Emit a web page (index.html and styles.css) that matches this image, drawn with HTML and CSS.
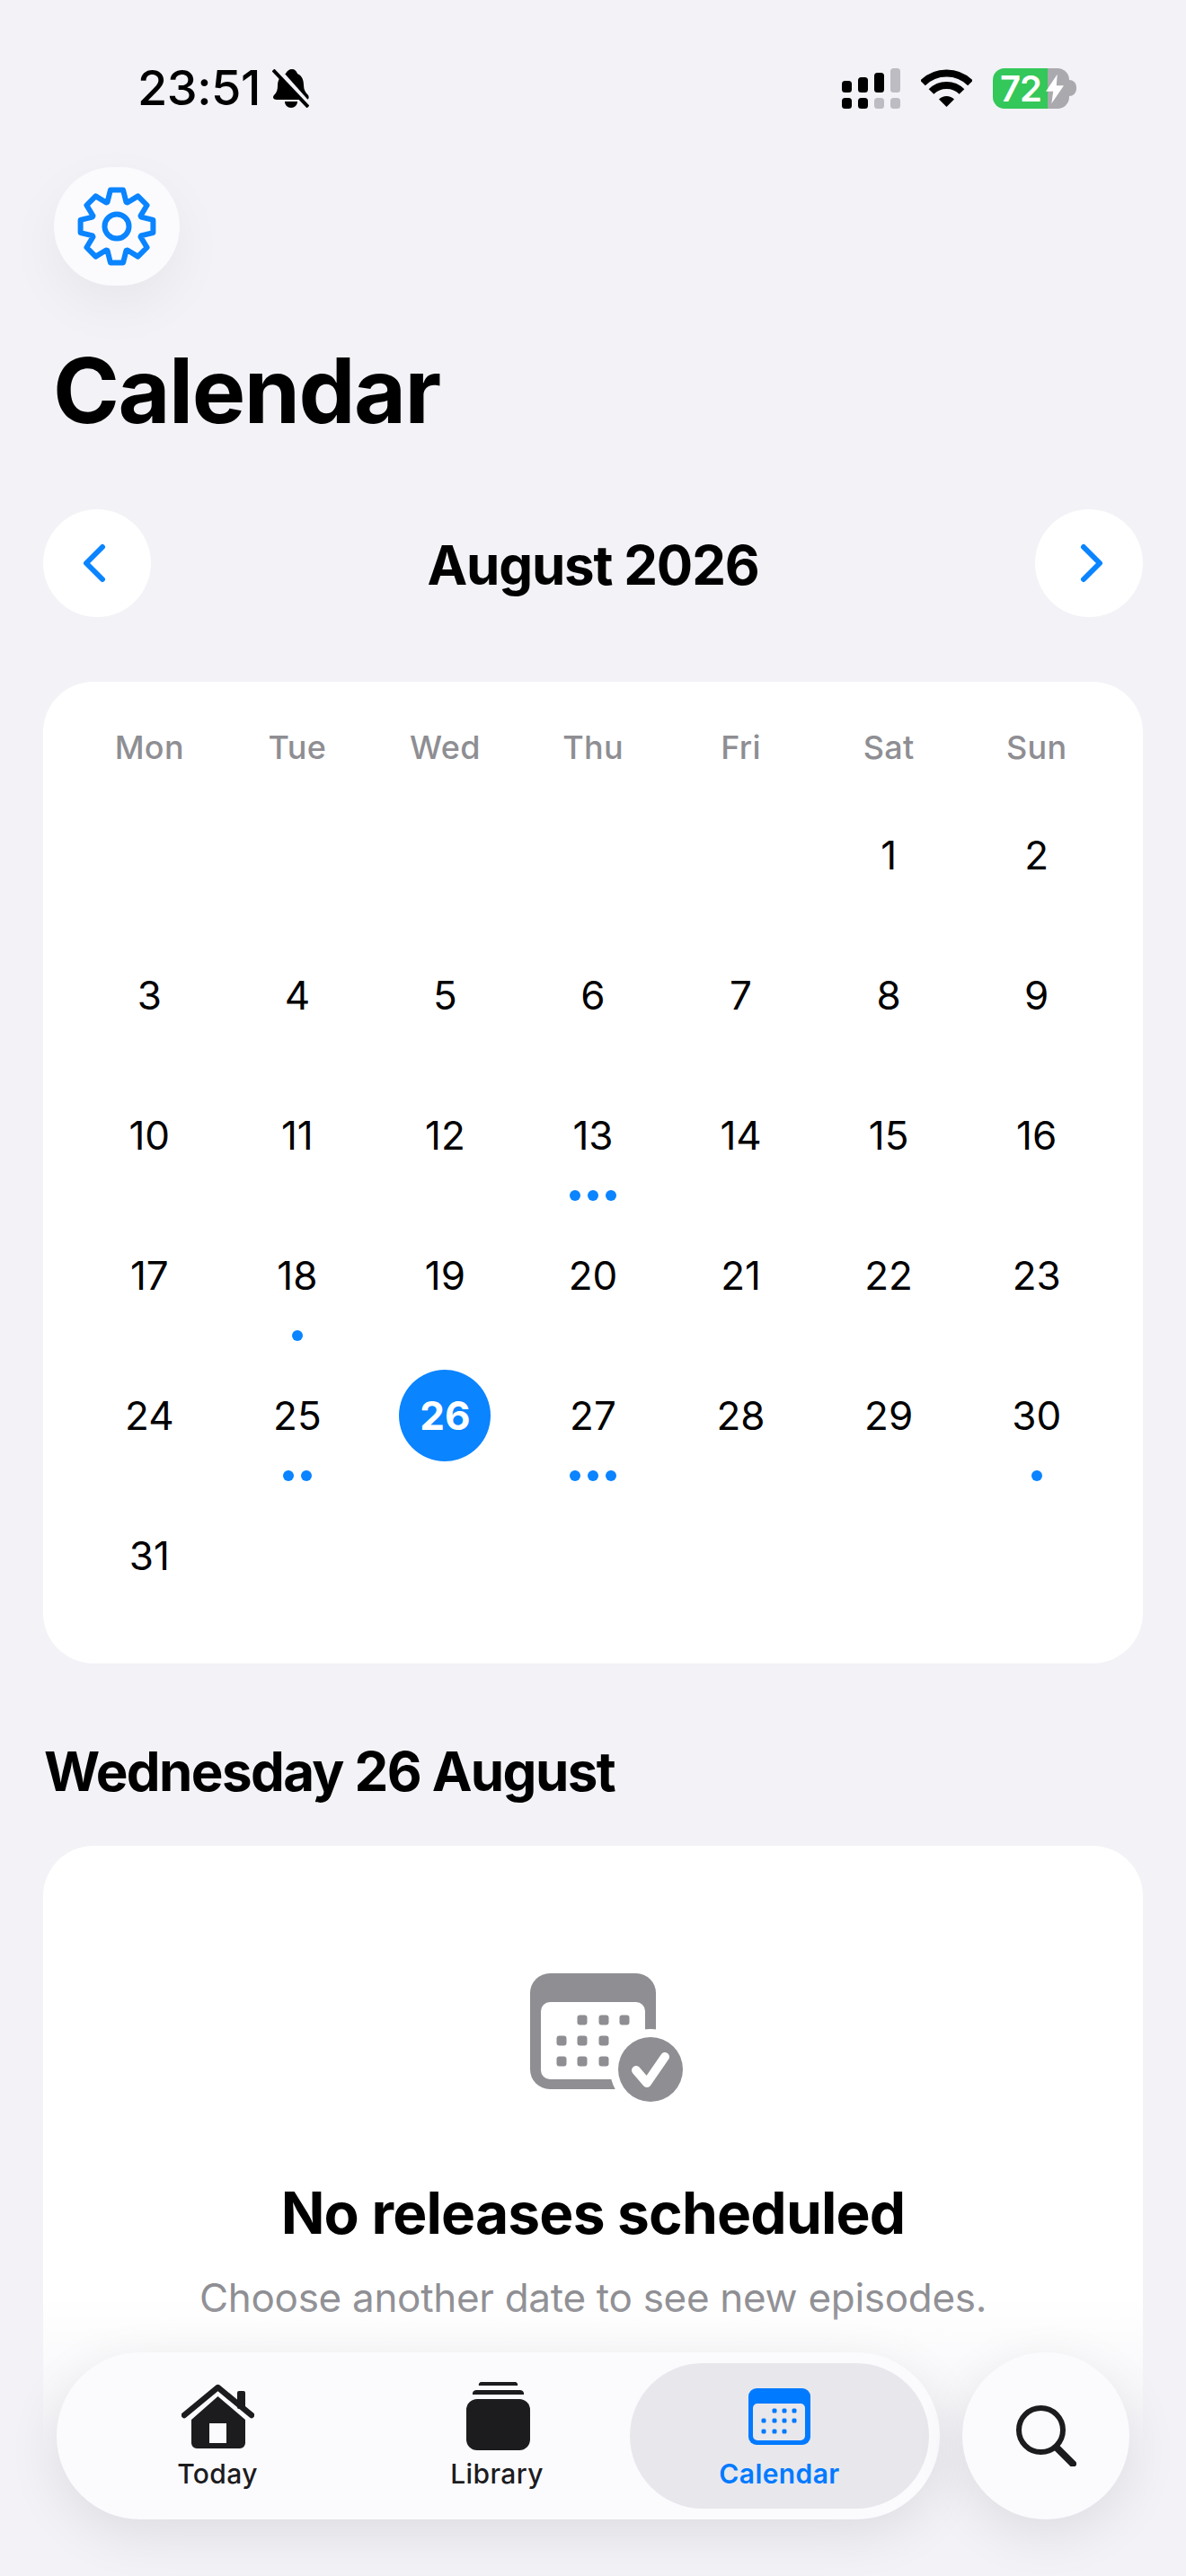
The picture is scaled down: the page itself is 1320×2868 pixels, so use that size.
FILE: index.html
```html
<html lang="en">
   <head>
      <meta charset="UTF-8">
      <meta name="viewport" content="width=device-width, initial-scale=1.0">
      <title>Calendar</title>
      <link rel="stylesheet" href="styles.css">
   </head>
   <body>
      <div class="page">
         <div class="status-bar">
            <div class="status-left">
               <span class="time">23:51</span>
               <svg class="bell" viewBox="0 0 41 43">
                  <path d="M22 0c3 0 5 2 6 5 5 2 7 7 7 13 0 5 2 8 5 11 1 2 1 4-1 5H5c-4 0-5-3-3-5 3-3 4-6 4-11C6 12 9 7 15 5c1-3 4-5 7-5zM14 36h14c0 4-3 7-7 7s-7-3-7-7z"/>
                  <path class="bell-gap" d="M3 -2L42 42"/>
                  <path class="bell-slash" d="M1 1L40 42"/>
               </svg>
            </div>
            <div class="status-right">
               <svg class="signal" viewBox="0 0 65 45">
                  <rect x="0" y="14" width="11" height="13" rx="3.5"/>
                  <rect x="18" y="10" width="11" height="17" rx="3.5"/>
                  <rect x="36" y="5" width="11" height="22" rx="3.5"/>
                  <rect class="signal-off" x="54" y="0" width="11" height="27" rx="3.5"/>
                  <rect x="0" y="33" width="11" height="12" rx="3.5"/>
                  <rect x="18" y="33" width="11" height="12" rx="3.5"/>
                  <rect class="signal-off" x="36" y="33" width="11" height="12" rx="3.5"/>
                  <rect class="signal-off" x="54" y="33" width="11" height="12" rx="3.5"/>
               </svg>
               <svg class="wifi" viewBox="0 0 57 42">
                  <path class="wifi-arc" d="M2 15.5A37.5 37.5 0 0 1 55 15.5"/>
                  <path class="wifi-arc" d="M11.5 25A24 24 0 0 1 45.5 25"/>
                  <path d="M28.5 42L20 33.5A12 12 0 0 1 37 33.5Z"/>
               </svg>
               <div class="battery">
                  <div class="battery-body">
                     <span class="battery-level">72</span>
                     <svg class="battery-bolt" viewBox="0 0 22 36">
                        <path d="M14 0L0 21h9L7 36l15-22h-9z"/>
                     </svg>
                  </div>
                  <div class="battery-nub"></div>
               </div>
            </div>
         </div>

         <button class="settings-button">
            <svg class="gear" viewBox="-44 -44 88 88">
               <polygon points="-10.4,-27.1 -7.1,-40.4 7.1,-40.4 10.4,-27.1 11.8,-26.5 23.5,-33.6 33.6,-23.5 26.5,-11.8 27.1,-10.4 40.4,-7.1 40.4,7.1 27.1,10.4 26.5,11.8 33.6,23.5 23.5,33.6 11.8,26.5 10.4,27.1 7.1,40.4 -7.1,40.4 -10.4,27.1 -11.8,26.5 -23.5,33.6 -33.6,23.5 -26.5,11.8 -27.1,10.4 -40.4,7.1 -40.4,-7.1 -27.1,-10.4 -26.5,-11.8 -33.6,-23.5 -23.5,-33.6 -11.8,-26.5"/>
               <circle cx="0" cy="0" r="13.5"/>
            </svg>
         </button>

         <h1 class="page-title">Calendar</h1>

         <div class="month-nav">
            <button class="nav-button nav-prev">
               <svg class="chevron" viewBox="0 0 28 44"><path d="M23 4L5 22l18 18"/></svg>
            </button>
            <h2 class="month-title">August 2026</h2>
            <button class="nav-button nav-next">
               <svg class="chevron" viewBox="0 0 28 44"><path d="M5 4l18 18L5 40"/></svg>
            </button>
         </div>

         <div class="card calendar-card">
            <div class="weekdays">
               <span>Mon</span><span>Tue</span><span>Wed</span><span>Thu</span><span>Fri</span><span>Sat</span><span>Sun</span>
            </div>
            <div class="days">
               <div class="day"></div>
               <div class="day"></div>
               <div class="day"></div>
               <div class="day"></div>
               <div class="day"></div>
               <div class="day"><span class="num">1</span></div>
               <div class="day"><span class="num">2</span></div>

               <div class="day"><span class="num">3</span></div>
               <div class="day"><span class="num">4</span></div>
               <div class="day"><span class="num">5</span></div>
               <div class="day"><span class="num">6</span></div>
               <div class="day"><span class="num">7</span></div>
               <div class="day"><span class="num">8</span></div>
               <div class="day"><span class="num">9</span></div>

               <div class="day"><span class="num">10</span></div>
               <div class="day"><span class="num">11</span></div>
               <div class="day"><span class="num">12</span></div>
               <div class="day"><span class="num">13</span><div class="dots"><i></i><i></i><i></i></div></div>
               <div class="day"><span class="num">14</span></div>
               <div class="day"><span class="num">15</span></div>
               <div class="day"><span class="num">16</span></div>

               <div class="day"><span class="num">17</span></div>
               <div class="day"><span class="num">18</span><div class="dots"><i></i></div></div>
               <div class="day"><span class="num">19</span></div>
               <div class="day"><span class="num">20</span></div>
               <div class="day"><span class="num">21</span></div>
               <div class="day"><span class="num">22</span></div>
               <div class="day"><span class="num">23</span></div>

               <div class="day"><span class="num">24</span></div>
               <div class="day"><span class="num">25</span><div class="dots"><i></i><i></i></div></div>
               <div class="day"><span class="num selected">26</span></div>
               <div class="day"><span class="num">27</span><div class="dots"><i></i><i></i><i></i></div></div>
               <div class="day"><span class="num">28</span></div>
               <div class="day"><span class="num">29</span></div>
               <div class="day"><span class="num">30</span><div class="dots"><i></i></div></div>

               <div class="day"><span class="num">31</span></div>
            </div>
         </div>

         <h2 class="section-title">Wednesday 26 August</h2>

         <div class="card empty-card">
            <svg class="empty-icon" viewBox="0 0 172 145">
               <rect class="icon-fill" x="0" y="0" width="140" height="129" rx="22"/>
               <rect class="icon-hole" x="12" y="32" width="116" height="86" rx="10"/>
               <g class="icon-fill">
                  <rect x="52.500" y="46.500" width="11" height="11" rx="3"/>
                  <rect x="76.500" y="46.500" width="11" height="11" rx="3"/>
                  <rect x="99.500" y="46.500" width="11" height="11" rx="3"/>
                  <rect x="29.500" y="69.500" width="11" height="11" rx="3"/>
                  <rect x="52.500" y="69.500" width="11" height="11" rx="3"/>
                  <rect x="76.500" y="69.500" width="11" height="11" rx="3"/>
                  <rect x="29.500" y="92.500" width="11" height="11" rx="3"/>
                  <rect x="52.500" y="92.500" width="11" height="11" rx="3"/>
                  <rect x="76.500" y="92.500" width="11" height="11" rx="3"/>
               </g>
               <circle class="icon-hole" cx="134" cy="107" r="45"/>
               <circle class="icon-fill" cx="134" cy="107" r="36"/>
               <path class="icon-check" d="M118 108l12 14 20-29"/>
            </svg>
            <h3 class="empty-title">No releases scheduled</h3>
            <p class="empty-text">Choose another date to see new episodes.</p>
         </div>

         <div class="bottom-fade"></div>

         <div class="dock">
            <nav class="tab-bar">
               <a class="tab">
                  <span class="tab-icon-box">
                     <svg class="home-icon" viewBox="0 0 81 72">
                        <path class="home-roof" d="M3 35L40.500 4 78 35"/>
                        <rect x="62" y="8" width="9" height="20" rx="2"/>
                        <path class="home-body" fill-rule="evenodd" d="M40.500 14L71 40v26a6 6 0 0 1-6 6H17a6 6 0 0 1-6-6V40zM31 44v22h19V44z"/>
                     </svg>
                  </span>
                  <span>Today</span>
               </a>
               <a class="tab">
                  <span class="tab-icon-box">
                     <svg class="library-icon" viewBox="0 0 71 76">
                        <path d="M17 0h37a3 3 0 0 1 3 4H14a3 3 0 0 1 3-4z"/>
                        <path d="M11 9h49a4 4 0 0 1 4 5H7a4 4 0 0 1 4-5z"/>
                        <rect x="0" y="19" width="71" height="57" rx="12"/>
                     </svg>
                  </span>
                  <span>Library</span>
               </a>
               <a class="tab tab-active">
                  <span class="tab-icon-box">
                     <svg class="calendar-icon" viewBox="0 0 69 63">
                        <rect class="cal-frame" x="0" y="0" width="69" height="63" rx="9"/>
                        <rect class="cal-hole" x="5" y="17" width="58" height="41" rx="5"/>
                        <g class="cal-frame">
                           <rect x="26.500" y="22.500" width="5" height="5" rx="1.500"/>
                           <rect x="37.500" y="22.500" width="5" height="5" rx="1.500"/>
                           <rect x="48.500" y="22.500" width="5" height="5" rx="1.500"/>
                           <rect x="14.500" y="33.500" width="5" height="5" rx="1.500"/>
                           <rect x="26.500" y="33.500" width="5" height="5" rx="1.500"/>
                           <rect x="37.500" y="33.500" width="5" height="5" rx="1.500"/>
                           <rect x="48.500" y="33.500" width="5" height="5" rx="1.500"/>
                           <rect x="14.500" y="45.500" width="5" height="5" rx="1.500"/>
                           <rect x="26.500" y="45.500" width="5" height="5" rx="1.500"/>
                           <rect x="37.500" y="45.500" width="5" height="5" rx="1.500"/>
                        </g>
                     </svg>
                  </span>
                  <span>Calendar</span>
               </a>
            </nav>
            <button class="search-button">
               <svg class="search-icon" viewBox="0 0 67 68">
                  <circle cx="27.500" cy="27.500" r="24.500"/>
                  <path class="search-handle" d="M45 47L63 65"/>
               </svg>
            </button>
         </div>
      </div>
   </body>
</html>
```

FILE: styles.css
```css
body {
margin: 0;
padding: 0;
background-color: #f2f2f7;
font-family: Inter, "Liberation Sans", sans-serif;
color: #000;
}
button {
border: none;
padding: 0;
font-family: inherit;
}
h1,
h2,
h3,
p {
margin: 0;
}
.page {
position: relative;
height: 2868px;
overflow: hidden;
}

/* status bar */
.status-bar {
display: flex;
justify-content: space-between;
align-items: center;
height: 56px;
padding: 70px 122px 0 153px;
}
.status-left {
display: flex;
align-items: center;
gap: 13px;
}
.time {
font-size: 54px;
font-weight: 500;
line-height: 56px;
letter-spacing: -0.5px;
}
.bell {
width: 41px;
height: 43px;
}
.bell-gap {
stroke: #f2f2f7;
stroke-width: 7;
}
.bell-slash {
stroke: #000;
stroke-width: 4;
}
.status-right {
display: flex;
align-items: center;
}
.signal {
width: 65px;
height: 45px;
}
.signal-off {
fill: #bcbcc2;
}
.wifi {
width: 57px;
height: 42px;
margin-left: 23px;
}
.wifi-arc {
fill: none;
stroke: #000;
stroke-width: 8;
}
.battery {
display: flex;
align-items: center;
margin-left: 23px;
}
.battery-body {
position: relative;
display: flex;
align-items: center;
width: 85px;
height: 45px;
border-radius: 13px;
background: linear-gradient(to right, #34c759 61px, #a9a9ae 61px);
}
.battery-level {
font-size: 40px;
font-weight: 600;
color: #fff;
line-height: 45px;
padding-left: 8px;
letter-spacing: -1px;
}
.battery-bolt {
position: absolute;
left: 59px;
top: 6px;
width: 20px;
height: 34px;
fill: #fff;
}
.battery-nub {
width: 8px;
height: 18px;
background-color: #a9a9ae;
border-radius: 0 8px 8px 0;
}

/* header */
.settings-button {
display: flex;
justify-content: center;
align-items: center;
width: 140px;
height: 132px;
margin: 60px 0 0 60px;
background-color: #fbfbfe;
border-radius: 66px;
box-shadow: 0 22px 60px rgba(0, 0, 0, 0.05);
}
.gear {
width: 88px;
height: 88px;
overflow: visible;
}
.gear polygon,
.gear circle {
fill: none;
stroke: #0a84ff;
stroke-width: 6;
stroke-linejoin: round;
}
.page-title {
margin: 57px 0 0 59px;
font-size: 100px;
font-weight: 700;
line-height: 120px;
letter-spacing: -1.5px;
}
.month-nav {
display: flex;
justify-content: space-between;
align-items: center;
margin: 72px 48px 0;
}
.nav-button {
display: flex;
justify-content: center;
align-items: center;
width: 120px;
height: 120px;
background-color: #fff;
border-radius: 50%;
}
.nav-prev {
padding-right: 6px;
}
.nav-next {
padding-left: 6px;
}
.chevron {
width: 28px;
height: 44px;
fill: none;
stroke: #0a84ff;
stroke-width: 6;
stroke-linecap: round;
stroke-linejoin: round;
}
.month-title {
position: relative;
top: 2px;
font-size: 60px;
font-weight: 700;
letter-spacing: -1.2px;
}

/* cards */
.card {
margin: 0 48px;
background-color: #fff;
border-radius: 56px;
}
.calendar-card {
margin-top: 72px;
padding: 51px 36px 15px;
}
.weekdays,
.days {
display: grid;
grid-template-columns: repeat(7, 1fr);
}
.weekdays {
margin-bottom: 47px;
font-size: 36px;
font-weight: 500;
line-height: 44px;
text-align: center;
color: #8e8e93;
letter-spacing: 0.3px;
}
.day {
display: flex;
flex-direction: column;
align-items: center;
height: 156px;
}
.num {
display: flex;
justify-content: center;
align-items: center;
width: 102px;
height: 102px;
flex: none;
font-size: 44px;
}
.num.selected {
background-color: #0a84ff;
border-radius: 50%;
color: #fff;
font-weight: 700;
}
.dots {
display: flex;
gap: 8px;
margin-top: 10px;
}
.dots i {
width: 12px;
height: 12px;
background-color: #0a84ff;
border-radius: 50%;
}
.section-title {
margin: 84px 0 0 49px;
font-size: 60px;
font-weight: 700;
line-height: 72px;
letter-spacing: -1.6px;
}
.empty-card {
height: 900px;
margin-top: 47px;
padding-top: 142px;
text-align: center;
}
.empty-icon {
display: block;
width: 172px;
height: 145px;
margin-left: 542px;
}
.icon-fill {
fill: #8e8e93;
}
.icon-hole {
fill: #fff;
}
.icon-check {
fill: none;
stroke: #fff;
stroke-width: 10;
stroke-linecap: round;
stroke-linejoin: round;
}
.empty-title {
margin-top: 82px;
font-size: 64px;
font-weight: 700;
line-height: 80px;
letter-spacing: -0.8px;
}
.empty-text {
margin-top: 27px;
font-size: 44px;
line-height: 54px;
color: #8e8e93;
letter-spacing: -0.3px;
}

/* bottom bar, lies over the page */
.bottom-fade {
position: absolute;
left: 0;
right: 0;
bottom: 0;
height: 310px;
background: linear-gradient(to bottom, rgba(242, 242, 247, 0), #f2f2f7 60%);
}
.dock {
position: absolute;
left: 63px;
top: 2619px;
display: flex;
gap: 25px;
}
.tab-bar {
display: grid;
grid-template-columns: 334px 288px 337px;
width: 983px;
height: 186px;
padding-left: 12px;
box-sizing: border-box;
align-items: center;
background-color: #fbfbfe;
border-radius: 93px;
box-shadow: 0 16px 60px rgba(0, 0, 0, 0.09);
}
.tab {
display: flex;
flex-direction: column;
align-items: center;
height: 143px;
padding-top: 19px;
font-size: 30px;
font-weight: 500;
line-height: 36px;
letter-spacing: 0.4px;
color: #1c1c1e;
}
.tab-active {
margin-left: 4px;
background-color: #e8e8ec;
border-radius: 81px;
color: #007aff;
font-weight: 600;
}
.tab-icon-box {
display: flex;
justify-content: center;
align-items: center;
height: 80px;
margin-bottom: 6px;
}
.home-icon {
width: 81px;
height: 72px;
fill: #1c1c1e;
}
.home-roof {
fill: none;
stroke: #1c1c1e;
stroke-width: 6.500;
stroke-linecap: round;
stroke-linejoin: round;
}
.library-icon {
width: 71px;
height: 76px;
margin-left: 3px;
fill: #1c1c1e;
}
.calendar-icon {
width: 69px;
height: 63px;
}
.cal-frame {
fill: #007aff;
}
.cal-hole {
fill: #e8e8ec;
}
.search-button {
display: flex;
justify-content: center;
align-items: center;
width: 186px;
height: 186px;
background-color: #fbfbfe;
border-radius: 50%;
box-shadow: 0 16px 60px rgba(0, 0, 0, 0.09);
}
.search-icon {
width: 67px;
height: 68px;
fill: none;
stroke: #1c1c1e;
stroke-width: 6;
stroke-linecap: round;
}
.search-handle {
stroke-width: 8;
}
```
